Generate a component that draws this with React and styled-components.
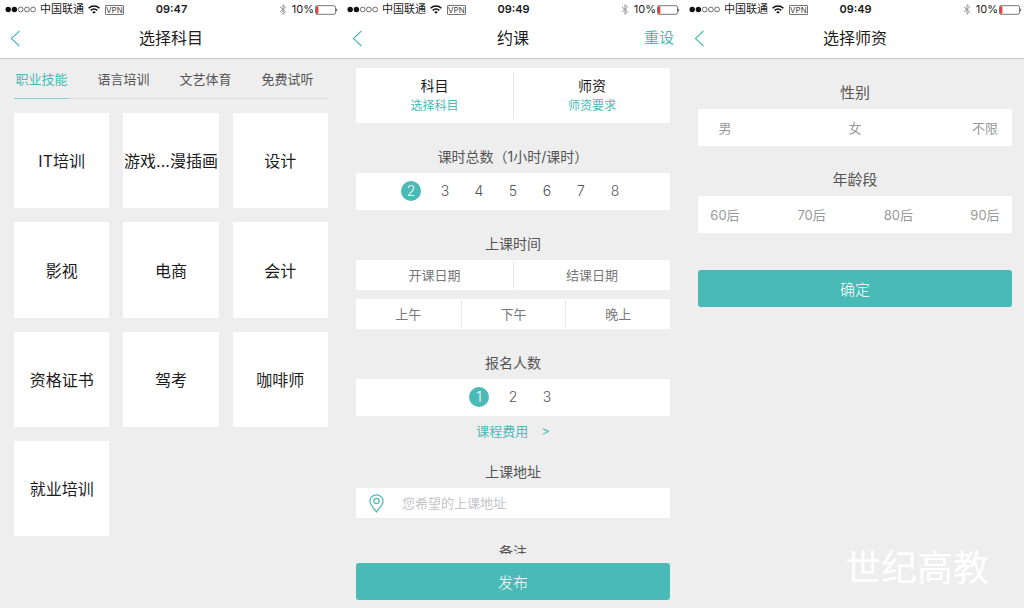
import React, { useState } from 'react';
import styled, { createGlobalStyle } from 'styled-components';

const GlobalStyle = createGlobalStyle`
    :root{
        --mainTeal:#4abab6;
        --pageGrey:#eeeeee;
        --lineGrey:#dcdcdc;
        --textDark:#1c1c1c;
        --textMid:#555555;
        --textSoft:#777777;
        --textPale:#999999;
    }
    *{
        box-sizing:border-box;
    }
    body{
        margin:0;
        overflow:hidden;
        background:var(--pageGrey);
        font-family:Inter, "Noto Sans CJK SC", sans-serif;
        color:var(--textDark);
    }
    button, input{
        font-family:inherit;
        margin:0;
        padding:0;
        border:0;
        background:none;
    }
    button{
        cursor:pointer;
    }
`;

const subjects = ['IT培训', '游戏...漫插画', '设计', '影视', '电商', '会计', '资格证书', '驾考', '咖啡师', '就业培训'];
const tabs = ['职业技能', '语言培训', '文艺体育', '免费试听'];

function StatusBar({ time }) {
    return (
        <StatusWrapper>
            <StatusSide>
                <svg width="31" height="7" viewBox="0 0 31 7" aria-hidden="true">
                    <circle cx="3.2" cy="3.5" r="2.7" fill="#111" />
                    <circle cx="9.4" cy="3.5" r="2.7" fill="#111" />
                    <g fill="none" stroke="#333" strokeWidth="0.7">
                        <circle cx="15.7" cy="3.5" r="2.4" />
                        <circle cx="21.9" cy="3.5" r="2.4" />
                        <circle cx="28.1" cy="3.5" r="2.4" />
                    </g>
                </svg>
                <Carrier>中国联通</Carrier>
                <svg width="12" height="9" viewBox="0 0 12 9" aria-hidden="true">
                    <g fill="none" stroke="#111" strokeWidth="1.5">
                        <path d="M0.6 3.3C3.6 0.3 8.4 0.3 11.4 3.3" />
                        <path d="M2.7 5.4C4.5 3.6 7.5 3.6 9.3 5.4" />
                    </g>
                    <path d="M6 8.8L4.2 6.9C5.2 5.9 6.8 5.9 7.8 6.9Z" fill="#111" />
                </svg>
                <Vpn>VPN</Vpn>
            </StatusSide>
            <Time>{time}</Time>
            <StatusSide $end>
                <svg width="8" height="11" viewBox="0 0 8 11" aria-hidden="true">
                    <path d="M1 3L6.6 7.8L4 10.3V0.7L6.6 3.2L1 8" fill="none" stroke="#888" strokeWidth="0.9" />
                </svg>
                <Percent>10%</Percent>
                <svg width="23" height="10" viewBox="0 0 23 10" aria-hidden="true">
                    <rect x="0.5" y="0.7" width="20" height="8.6" rx="1.6" fill="none" stroke="#555" strokeWidth="0.8" />
                    <rect x="1" y="1.2" width="2.4" height="7.6" rx="0.8" fill="#e0443e" />
                    <path d="M21.3 3.4C22.6 3.8 22.6 6.2 21.3 6.6Z" fill="#333" />
                </svg>
            </StatusSide>
        </StatusWrapper>
    );
}

function Navbar({ time, title, action }) {
    return (
        <NavWrapper>
            <StatusBar time={time} />
            <TitleRow>
                <BackButton type="button" aria-label="返回">
                    <svg width="10" height="17" viewBox="0 0 10 17" aria-hidden="true">
                        <path d="M9.4 1L1.4 8.5L9.4 16" fill="none" stroke="#4abab6" strokeWidth="1.1" />
                    </svg>
                </BackButton>
                <Title>{title}</Title>
                {action && <ActionButton type="button">{action}</ActionButton>}
            </TitleRow>
        </NavWrapper>
    );
}

function NumberPicker({ label, values, first }) {
    const [picked, setPicked] = useState(first);
    return (
        <NumberRow role="group" aria-label={label}>
            {values.map((n) => (
                <NumberButton key={n} type="button" $active={n === picked} aria-pressed={n === picked} onClick={() => setPicked(n)}>
                    {n}
                </NumberButton>
            ))}
        </NumberRow>
    );
}

function SubjectScreen() {
    const [tab, setTab] = useState(tabs[0]);
    return (
        <Screen>
            <Navbar time="09:47" title="选择科目" />
            <Content>
                <TabList>
                    {tabs.map((t) => (
                        <Tab key={t} type="button" $active={t === tab} onClick={() => setTab(t)}>{t}</Tab>
                    ))}
                </TabList>
                <TileGrid>
                    {subjects.map((s) => (
                        <Tile key={s} type="button">{s}</Tile>
                    ))}
                </TileGrid>
            </Content>
        </Screen>
    );
}

function BookingScreen() {
    return (
        <Screen>
            <Navbar time="09:49" title="约课" action="重设" />
            <Content>
                <TopCard>
                    <TopChoice type="button">
                        <strong>科目</strong>
                        <span>选择科目</span>
                    </TopChoice>
                    <TopChoice type="button">
                        <strong>师资</strong>
                        <span>师资要求</span>
                    </TopChoice>
                </TopCard>
                <Section>
                    <Heading>课时总数（1小时/课时）</Heading>
                    <NumberPicker label="课时总数" values={[2, 3, 4, 5, 6, 7, 8]} first={2} />
                </Section>
                <Section>
                    <Heading>上课时间</Heading>
                    <SplitStack>
                        <SplitRow>
                            <SplitButton type="button">开课日期</SplitButton>
                            <SplitButton type="button">结课日期</SplitButton>
                        </SplitRow>
                        <SplitRow>
                            <SplitButton type="button">上午</SplitButton>
                            <SplitButton type="button">下午</SplitButton>
                            <SplitButton type="button">晚上</SplitButton>
                        </SplitRow>
                    </SplitStack>
                </Section>
                <Section>
                    <Heading>报名人数</Heading>
                    <NumberPicker label="报名人数" values={[1, 2, 3]} first={1} />
                    <FeeLink href="#fee">
                        <span>课程费用</span>
                        <span>&gt;</span>
                    </FeeLink>
                </Section>
                <Section $tight>
                    <Heading as="label" htmlFor="address">上课地址</Heading>
                    <AddressRow>
                        <svg width="15" height="19" viewBox="0 0 15 19" aria-hidden="true">
                            <g fill="none" stroke="#4abab6" strokeWidth="1.2">
                                <path d="M7.5 18C4.6 14.2 1 10.6 1 7.2A6.5 6.4 0 0 1 14 7.2C14 10.6 10.4 14.2 7.5 18Z" />
                                <circle cx="7.5" cy="7" r="2.7" />
                            </g>
                        </svg>
                        <AddressInput id="address" type="text" placeholder="您希望的上课地址" />
                    </AddressRow>
                </Section>
                <Section>
                    <Heading>备注</Heading>
                </Section>
            </Content>
            <Footer>
                <MainButton type="button">发布</MainButton>
            </Footer>
        </Screen>
    );
}

function TeacherScreen() {
    return (
        <Screen>
            <Navbar time="09:49" title="选择师资" />
            <Content>
                <Section>
                    <Heading $large>性别</Heading>
                    <OptionRow>
                        <Option type="button">男</Option>
                        <Option type="button">女</Option>
                        <Option type="button">不限</Option>
                    </OptionRow>
                </Section>
                <Section>
                    <Heading $large>年龄段</Heading>
                    <OptionRow>
                        <Option type="button">60后</Option>
                        <Option type="button">70后</Option>
                        <Option type="button">80后</Option>
                        <Option type="button">90后</Option>
                    </OptionRow>
                </Section>
                <Confirm>
                    <MainButton type="button">确定</MainButton>
                </Confirm>
            </Content>
        </Screen>
    );
}

export default function App() {
    return (
        <Board>
            <GlobalStyle />
            <SubjectScreen />
            <BookingScreen />
            <TeacherScreen />
            <Watermark>世纪高教</Watermark>
        </Board>
    );
}

const Board = styled.main`
    display:grid;
    grid-template-columns:repeat(3, 1fr);
    margin-right:-2px;
    height:100vh;
`;

const Screen = styled.section`
    display:flex;
    flex-direction:column;
    min-width:0;
    min-height:0;
`;

const NavWrapper = styled.header`
    flex:none;
    background:#fff;
    border-bottom:1px solid #c9c9c9;
`;

const StatusWrapper = styled.div`
    display:grid;
    grid-template-columns:1fr auto 1fr;
    align-items:center;
    height:19px;
    padding:0 4px 0 5px;
    font-size:11px;
    line-height:19px;
`;

const StatusSide = styled.div`
    display:flex;
    align-items:center;
    justify-content:${(props) => (props.$end ? 'flex-end' : 'flex-start')};
`;

const Carrier = styled.span`
    margin:0 4px;
`;

const Vpn = styled.span`
    margin-left:5px;
    border:1px solid #777;
    border-radius:1px;
    font-size:8px;
    line-height:8px;
    color:#444;
`;

const Time = styled.span`
    font-weight:600;
`;

const Percent = styled.span`
    margin:0 1px 0 5px;
`;

const TitleRow = styled.div`
    display:grid;
    grid-template-columns:1fr auto 1fr;
    align-items:center;
    height:39px;
    padding:0 10px 1px;
`;

const BackButton = styled.button`
    display:flex;
    justify-self:start;
`;

const Title = styled.h1`
    margin:0;
    font-size:16px;
    font-weight:400;
    line-height:24px;
`;

const ActionButton = styled.button`
    justify-self:end;
    font-size:15px;
    line-height:24px;
    color:var(--mainTeal);
`;

const Content = styled.div`
    flex:1;
    min-height:0;
    padding:0 14px;
    overflow-y:auto;
    scrollbar-width:none;
`;

const TabList = styled.nav`
    display:grid;
    grid-template-columns:repeat(4, 1fr);
    gap:27px;
    padding-right:13px;
    border-bottom:1px solid var(--lineGrey);
`;

const Tab = styled.button`
    height:40px;
    margin-bottom:-1px;
    padding-bottom:1px;
    border-bottom:1px solid ${(props) => (props.$active ? '#8ccfd0' : 'transparent')};
    font-size:13px;
    white-space:nowrap;
    color:${(props) => (props.$active ? 'var(--mainTeal)' : 'var(--textMid)')};
`;

const TileGrid = styled.div`
    display:grid;
    grid-template-columns:repeat(3, 1fr);
    gap:14px;
    padding:14px 0;
`;

const Tile = styled.button`
    aspect-ratio:1;
    min-width:0;
    padding-bottom:1px;
    background:#fff;
    font-size:16px;
    white-space:nowrap;
    color:var(--textDark);
`;

const TopCard = styled.div`
    display:grid;
    grid-template-columns:1fr 1fr;
    margin-top:9px;
    padding:4px 0;
    background:#fff;
`;

const TopChoice = styled.button`
    display:flex;
    flex-direction:column;
    align-items:center;
    height:47px;
    padding-top:4px;
    line-height:20px;
    & + &{
        border-left:1px solid #e8e8e8;
    }
    strong{
        font-size:14px;
        font-weight:400;
        color:var(--textDark);
    }
    span{
        font-size:12px;
        color:var(--mainTeal);
    }
`;

const Section = styled.section`
    display:flex;
    flex-direction:column;
    padding-top:${(props) => (props.$tight ? '15px' : '24px')};
`;

const Heading = styled.h2`
    margin:0 0 6px;
    font-size:${(props) => (props.$large ? '15px' : '14px')};
    font-weight:400;
    line-height:20px;
    text-align:center;
    color:var(--textMid);
`;

const NumberRow = styled.div`
    display:flex;
    justify-content:center;
    align-items:center;
    gap:14px;
    height:37px;
    padding-bottom:1px;
    background:#fff;
`;

const NumberButton = styled.button`
    width:20px;
    height:20px;
    border-radius:50%;
    font-size:14px;
    font-weight:300;
    line-height:20px;
    background:${(props) => (props.$active ? 'var(--mainTeal)' : 'transparent')};
    color:${(props) => (props.$active ? '#fff' : 'var(--textMid)')};
`;

const SplitStack = styled.div`
    display:grid;
    gap:9px;
`;

const SplitRow = styled.div`
    display:grid;
    grid-auto-flow:column;
    grid-auto-columns:1fr;
    padding:1px 0;
    background:#fff;
`;

const SplitButton = styled.button`
    height:28px;
    padding-bottom:2px;
    font-size:13px;
    color:var(--textSoft);
    & + &{
        border-left:1px solid #e8e8e8;
    }
`;

const FeeLink = styled.a`
    display:flex;
    justify-content:center;
    gap:13px;
    font-size:13px;
    line-height:31px;
    text-decoration:none;
    color:var(--mainTeal);
`;

const AddressRow = styled.div`
    display:flex;
    align-items:center;
    gap:18px;
    height:30px;
    padding:0 13px;
    background:#fff;
`;

const AddressInput = styled.input`
    flex:1;
    min-width:0;
    font-size:13px;
    line-height:20px;
    outline:none;
    &::placeholder{
        color:#c4c4c9;
    }
`;

const Footer = styled.footer`
    flex:none;
    padding:9px 14px 8px;
`;

const MainButton = styled.button`
    width:100%;
    height:37px;
    padding-bottom:1px;
    border-radius:3px;
    background:var(--mainTeal);
    font-size:15px;
    font-weight:300;
    color:#fff;
`;

const OptionRow = styled.div`
    display:flex;
    justify-content:space-between;
    height:37px;
    background:#fff;
`;

const Option = styled.button`
    width:54px;
    padding-bottom:1px;
    font-size:13px;
    color:var(--textPale);
`;

const Confirm = styled.div`
    padding-top:37px;
`;

/* sits over the last screen */
const Watermark = styled.div`
    position:absolute;
    right:35px;
    bottom:16px;
    font-size:36px;
    line-height:48px;
    color:#fff;
    pointer-events:none;
`;
